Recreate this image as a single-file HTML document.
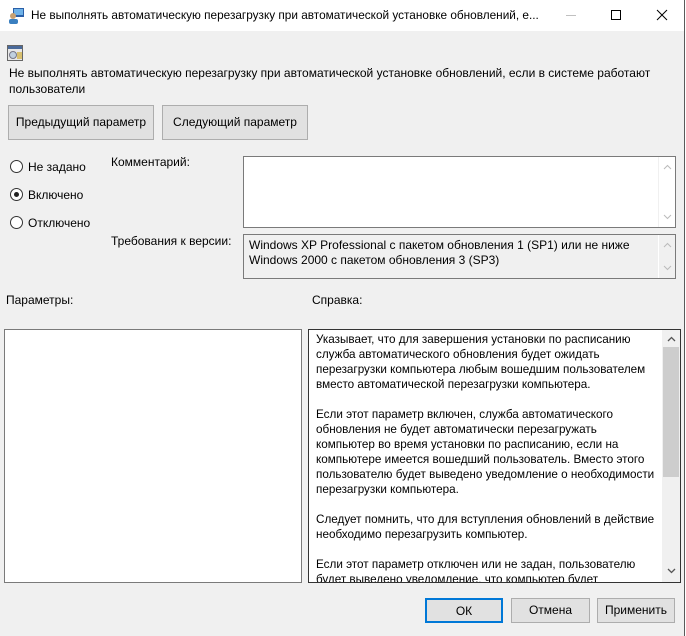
<!DOCTYPE html>
<html><head><meta charset="utf-8"><style>
*{margin:0;padding:0;box-sizing:border-box}
body{width:686px;height:636px;background:#fff;font-family:"Liberation Sans",sans-serif;font-size:12px;color:#000;position:relative;overflow:hidden}
.win{position:absolute;left:0;top:0;width:685px;height:636px;border-right:1px solid #5a5a5a;background:#f0f0f0}
.title{position:absolute;left:0;top:0;width:684px;height:31px;background:#fff}
.a{position:absolute;white-space:nowrap}
.btn{position:absolute;background:#e1e1e1;border:1px solid #adadad;text-align:center;line-height:32px;font-size:12px}
.box{position:absolute;background:#fff;border:1px solid #7a7a7a;overflow:hidden}
.radio{position:absolute;width:13px;height:13px;border:1px solid #333;border-radius:50%;background:#fff}
.sb{position:absolute;right:0;top:0;bottom:0;width:17px;background:#f0f0f0}
.arr{position:absolute;left:4px;width:9px;height:6px}
</style></head><body>
<div class="win">
<div class="title">
<svg class="a" style="left:8px;top:7px" width="17" height="17" viewBox="0 0 17 17"><rect x="5" y="1" width="11" height="9" fill="#2a5fa8"/><rect x="6" y="2" width="9" height="6" fill="#6fb2e8"/><circle cx="5" cy="9" r="3" fill="#c8a070"/><rect x="1" y="12" width="9" height="5" rx="2" fill="#3a7fc0"/></svg>
<div class="a" style="left:31px;top:8px;font-size:11.8px">Не выполнять автоматическую перезагрузку при автоматической установке обновлений, е...</div>
<div class="a" style="left:566px;top:15px;width:10px;height:1px;background:#c0c0c0"></div>
<div class="a" style="left:611px;top:10px;width:10px;height:10px;border:1px solid #000"></div>
<svg class="a" style="left:656px;top:9px" width="12" height="12"><path d="M1 1L11 11M11 1L1 11" stroke="#000" stroke-width="1"/></svg>
</div>
<svg class="a" style="left:7px;top:45px" width="16" height="16" viewBox="0 0 16 16"><rect x="0.5" y="0.5" width="15" height="15" fill="#e8e8e8" stroke="#666"/><rect x="1" y="1" width="14" height="3" fill="#4a6a9a"/><circle cx="6" cy="10" r="3.5" fill="#c0d0e0" stroke="#778"/><rect x="10" y="7" width="5" height="7" fill="#d8c070"/></svg>
<div class="a" style="left:9px;top:66px">Не выполнять автоматическую перезагрузку при автоматической установке обновлений, если в системе работают</div>
<div class="a" style="left:9px;top:82px">пользователи</div>
<div class="btn" style="left:8px;top:105px;width:146px;height:35px">Предыдущий параметр</div>
<div class="btn" style="left:162px;top:105px;width:146px;height:35px">Следующий параметр</div>
<div class="radio" style="left:10px;top:160px"></div><div class="a" style="left:28px;top:160px">Не задано</div>
<div class="radio" style="left:10px;top:188px"><div style="position:absolute;left:3px;top:3px;width:5px;height:5px;border-radius:50%;background:#222"></div></div><div class="a" style="left:28px;top:188px">Включено</div>
<div class="radio" style="left:10px;top:216px"></div><div class="a" style="left:28px;top:216px">Отключено</div>
<div class="a" style="left:111px;top:155px">Комментарий:</div>
<div class="box" style="left:243px;top:156px;width:433px;height:72px"><div class="sb" style="background:#fff;border-left:1px solid #f0f0f0"><svg class="arr" style="top:7px"><path d="M1 5L4.5 1.5L8 5" stroke="#bbb" fill="none"/></svg><svg class="arr" style="bottom:7px"><path d="M1 1L4.5 4.5L8 1" stroke="#bbb" fill="none"/></svg></div></div>
<div class="a" style="left:111px;top:234px">Требования к версии:</div>
<div class="box" style="left:243px;top:234px;width:433px;height:45px;background:#f0f0f0"><div class="a" style="left:5px;top:3px">Windows XP Professional с пакетом обновления 1 (SP1) или не ниже</div><div class="a" style="left:5px;top:18px">Windows 2000 с пакетом обновления 3 (SP3)</div><div class="sb" style="border-left:1px solid #fff"><svg class="arr" style="top:7px"><path d="M1 5L4.5 1.5L8 5" stroke="#bbb" fill="none"/></svg><svg class="arr" style="bottom:7px"><path d="M1 1L4.5 4.5L8 1" stroke="#bbb" fill="none"/></svg></div></div>
<div class="a" style="left:6px;top:293px">Параметры:</div>
<div class="a" style="left:312px;top:293px">Справка:</div>
<div class="box" style="left:4px;top:329px;width:298px;height:254px"></div>
<div class="box" style="left:308px;top:329px;width:373px;height:254px;border-color:#333;line-height:15px">
<div style="position:absolute;left:7px;top:2px;width:350px;white-space:nowrap;font-size:11.7px">Указывает, что для завершения установки по расписанию<br>служба автоматического обновления будет ожидать<br>перезагрузки компьютера любым вошедшим пользователем<br>вместо автоматической перезагрузки компьютера.<br><br>Если этот параметр включен, служба автоматического<br>обновления не будет автоматически перезагружать<br>компьютер во время установки по расписанию, если на<br>компьютере имеется вошедший пользователь. Вместо этого<br>пользователю будет выведено уведомление о необходимости<br>перезагрузки компьютера.<br><br>Следует помнить, что для вступления обновлений в действие<br>необходимо перезагрузить компьютер.<br><br>Если этот параметр отключен или не задан, пользователю<br>будет выведено уведомление, что компьютер будет</div>
<div class="sb" style="width:18px;background:#f0f0f0;right:0"><svg class="arr" style="top:6px;left:5px"><path d="M1 5L4.5 1.5L8 5" stroke="#555" stroke-width="1.3" fill="none"/></svg><div style="position:absolute;left:1px;top:17px;width:16px;height:130px;background:#cdcdcd"></div><svg class="arr" style="bottom:8px;left:5px"><path d="M1 1L4.5 4.5L8 1" stroke="#555" stroke-width="1.3" fill="none"/></svg></div>
</div>
<div class="btn" style="left:425px;top:598px;width:78px;height:25px;line-height:23px;border:2px solid #0078d7">ОК</div>
<div class="btn" style="left:511px;top:598px;width:79px;height:25px;line-height:23px">Отмена</div>
<div class="btn" style="left:597px;top:598px;width:78px;height:25px;line-height:23px">Применить</div>
</div>
</body></html>
